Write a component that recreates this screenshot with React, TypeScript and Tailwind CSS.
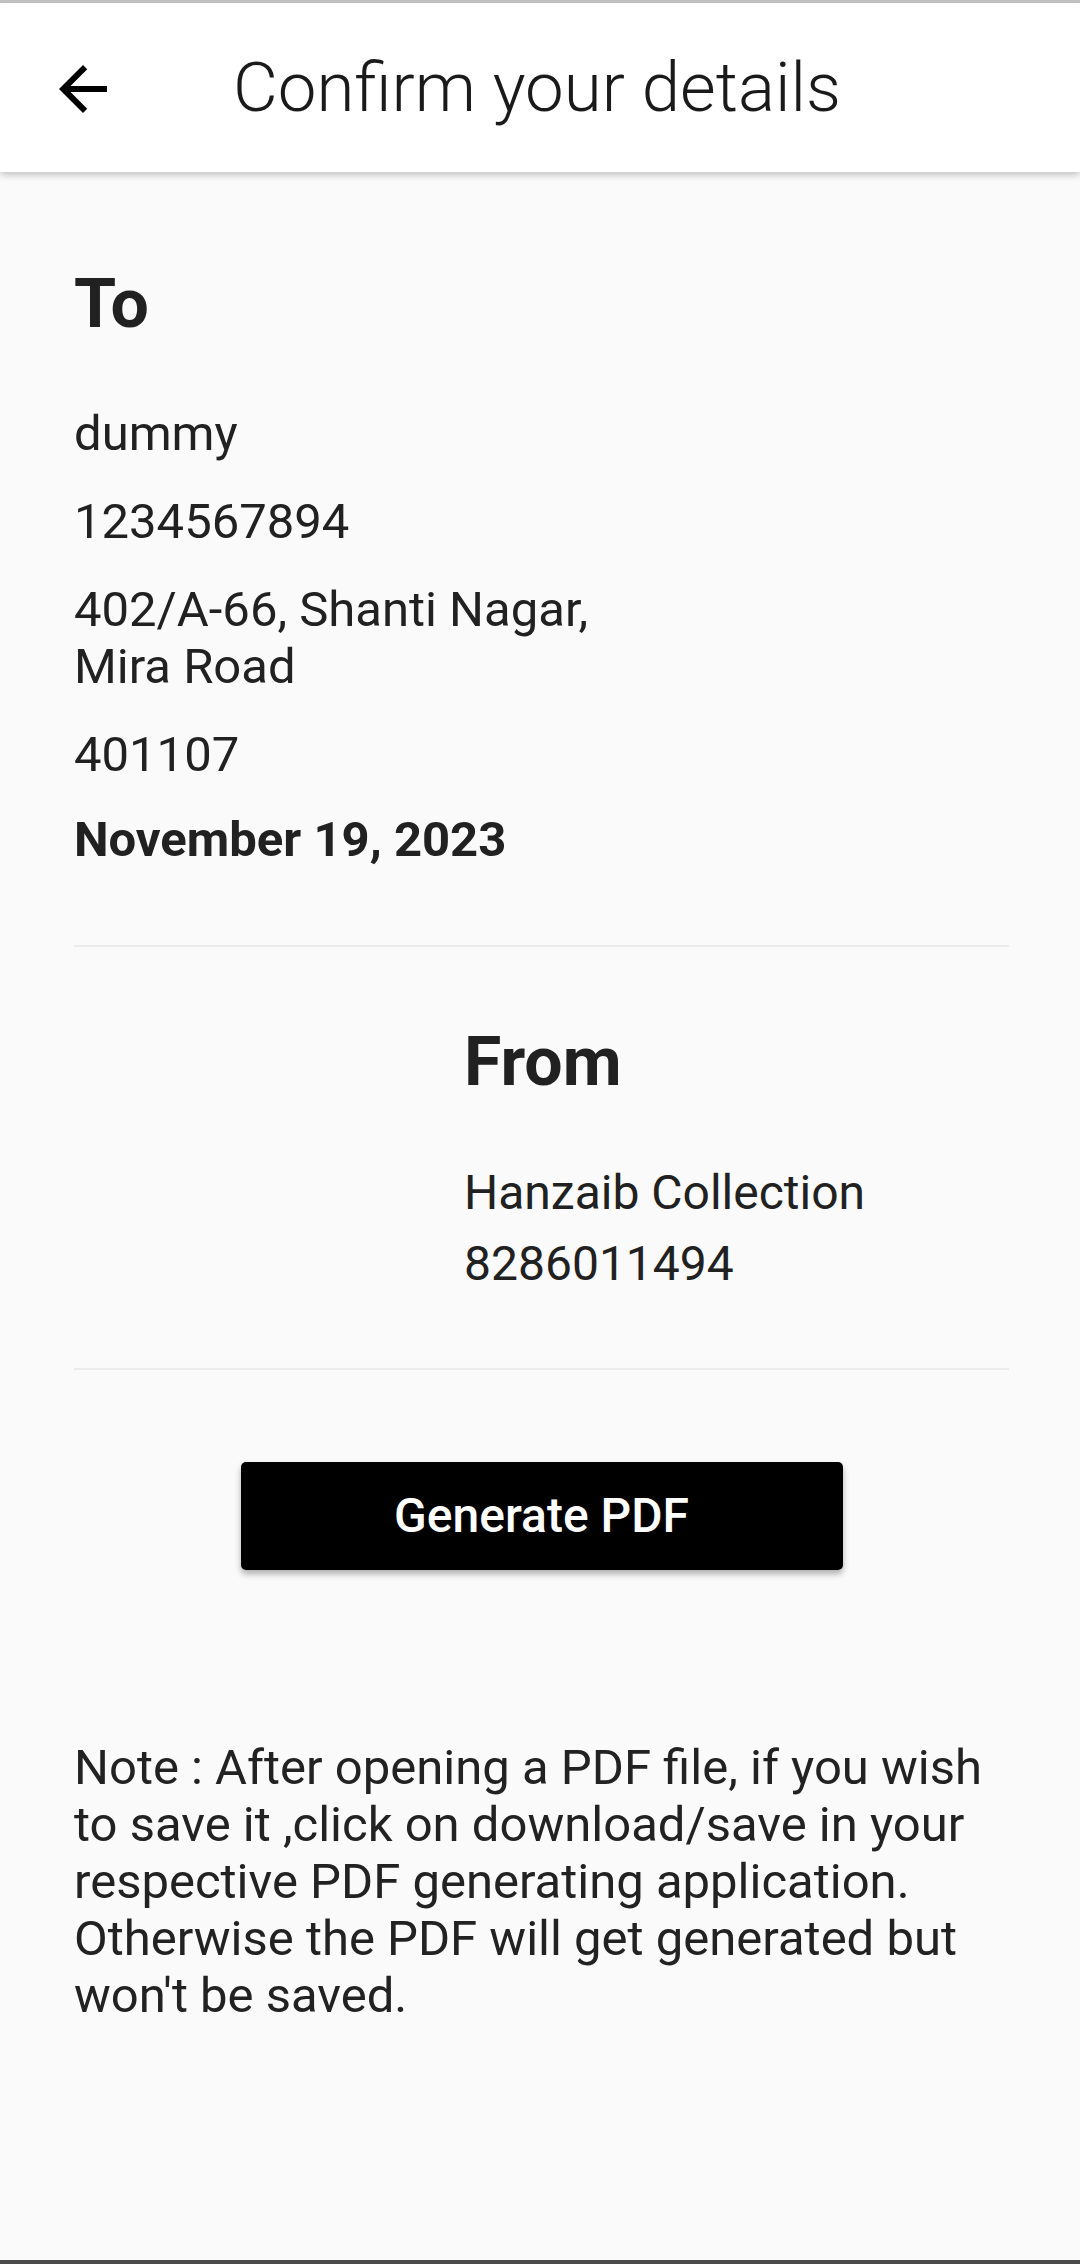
import React from "react";

type Recipient = {
  name: string;
  phone: string;
  address: string;
  pincode: string;
  date: string;
};

type Sender = {
  shop: string;
  phone: string;
};

const recipient: Recipient = {
  name: "dummy",
  phone: "1234567894",
  address: "402/A-66, Shanti Nagar,\nMira Road",
  pincode: "401107",
  date: "November 19, 2023",
};

const sender: Sender = {
  shop: "Hanzaib Collection",
  phone: "8286011494",
};

const BackArrow = () => (
  <svg width="72" height="72" viewBox="0 0 24 24" fill="#000">
    <path d="M20 11H7.83l5.59-5.59L12 4l-8 8 8 8 1.41-1.41L7.83 13H20v-2z" />
  </svg>
);

const Header = () => (
  <div className="relative z-10 bg-white h-[169px] flex items-center shadow-[0_3px_7px_rgba(0,0,0,0.22)]">
    <div className="ml-[47px] mt-[2px]">
      <BackArrow />
    </div>
    <h1 className="ml-[114px] text-[69px] leading-[80px] font-light text-[#1a1a1a]">
      Confirm your details
    </h1>
  </div>
);

const Divider = () => <div className="h-[2px] bg-[#ececec]" />;

const App = () => {
  return (
    <div className="w-[1080px] h-[2264px] flex flex-col bg-[#fafafa] font-['Roboto',sans-serif] text-[#212121]">
      <div className="h-[3px] bg-[#c4c4c4]" />
      <Header />

      <div className="flex-1 flex flex-col pl-[74px] pr-[71px]">
        {/* To */}
        <h2 className="mt-[92px] text-[68px] leading-[80px] font-bold">To</h2>
        <div className="mt-[61px] flex flex-col gap-[31px] text-[49px] leading-[57px]">
          <p>{recipient.name}</p>
          <p>{recipient.phone}</p>
          <p className="whitespace-pre-line">{recipient.address}</p>
          <p>{recipient.pincode}</p>
          <p className="font-bold -mt-[3px]">{recipient.date}</p>
        </div>

        <div className="mt-[77px]">
          <Divider />
        </div>

        {/* From */}
        <div className="ml-[390px] mt-[75px] flex flex-col">
          <h2 className="text-[68px] leading-[80px] font-bold">From</h2>
          <div className="mt-[62px] flex flex-col gap-[14px] text-[48px] leading-[57px]">
            <p>{sender.shop}</p>
            <p>{sender.phone}</p>
          </div>
        </div>

        <div className="mt-[76px]">
          <Divider />
        </div>

        <div className="mt-[92px] flex justify-center">
          <button className="w-[602px] h-[108px] bg-black rounded-[5px] text-white text-[48px] font-medium shadow-[0_4px_6px_rgba(0,0,0,0.3)]">
            Generate PDF
          </button>
        </div>

        <p className="mt-[169px] max-w-[915px] text-[49px] leading-[57px] text-[#222]">
          Note : After opening a PDF file, if you wish to save it ,click on
          download/save in your respective PDF generating application.
          Otherwise the PDF will get generated but won't be saved.
        </p>
      </div>

      <div className="h-[4px] bg-[#4a4a4a]" />
    </div>
  );
};

export default App;
